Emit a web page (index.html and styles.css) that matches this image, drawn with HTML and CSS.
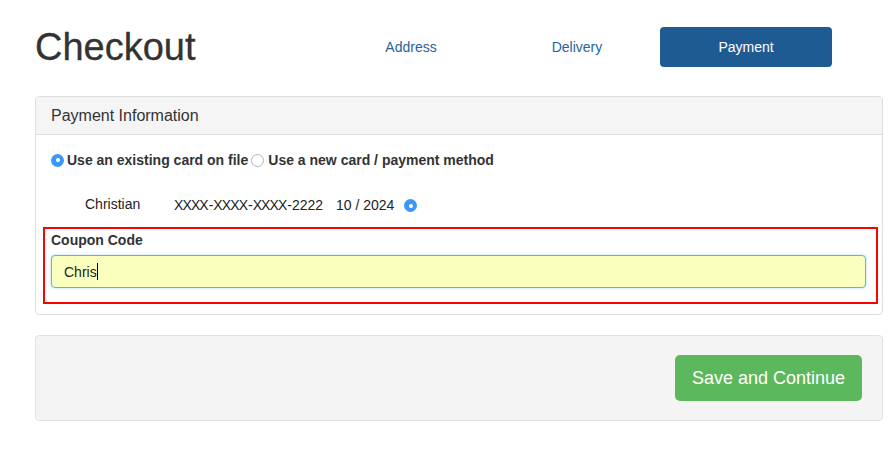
FILE: index.html
```html
<!DOCTYPE html>
<html>
<head>
<meta charset="utf-8">
<link rel="stylesheet" href="styles.css">
</head>
<body>
<div class="page">
  <header class="top">
    <h1 class="title">Checkout</h1>
    <nav class="steps">
      <a class="step step-a">Address</a>
      <a class="step step-d">Delivery</a>
      <a class="step step-active">Payment</a>
    </nav>
  </header>

  <section class="panel">
    <div class="panel-head">Payment Information</div>
    <div class="panel-body">
      <div class="choice-row">
        <label class="choice"><span class="radio radio-on"></span>Use an existing card on file</label>
        <label class="choice"><span class="radio radio-off"></span>Use a new card / payment method</label>
      </div>
      <div class="card-row">
        <span class="card-name">Christian</span>
        <span class="card-num"><span class="mask">XXXX</span>-<span class="mask">XXXX</span>-<span class="mask">XXXX</span>-2222</span>
        <span class="card-exp">10 / 2024</span>
        <span class="radio radio-on radio-small"></span>
      </div>
      <div class="coupon">
        <div class="coupon-label">Coupon Code</div>
        <div class="coupon-input"><span class="typed">Chris</span><span class="caret"></span></div>
      </div>
    </div>
  </section>

  <section class="footer-panel">
    <button class="save">Save and Continue</button>
  </section>
</div>
</body>
</html>
```

FILE: styles.css
```css
* { box-sizing: border-box; }
html, body { margin: 0; padding: 0; background: #fff; }
body {
  font-family: "Liberation Sans", Arial, Helvetica, sans-serif;
  color: #333;
  width: 890px;
}
.page {
  padding: 27px 0 0 35px;
  width: 883px;
}
.top {
  display: flex;
  align-items: center;
  height: 40px;
}
.title {
  margin: 0;
  font-size: 38px;
  font-weight: normal;
  color: #333;
  line-height: 40px;
  width: 293px;
  -webkit-text-stroke: 0.3px #333;
}
.steps {
  display: flex;
  align-items: center;
  height: 40px;
}
.step {
  display: flex;
  align-items: center;
  justify-content: center;
  height: 40px;
  font-size: 14px;
  color: #2a6496;
  text-decoration: none;
}
.step-a { width: 166px; }
.step-d { width: 166px; }
.step-active {
  width: 172px;
  background: #1f5b93;
  color: #fff;
  border-radius: 4px;
}

.panel {
  margin-top: 29px;
  border: 1px solid #ddd;
  border-radius: 4px;
  width: 848px;
  height: 219px;
}
.panel-head {
  height: 38px;
  background: #f5f5f5;
  border-bottom: 1px solid #ddd;
  border-radius: 3px 3px 0 0;
  padding-left: 15px;
  font-size: 16px;
  line-height: 37px;
  color: #333;
}
.panel-body {
  padding: 0 4px 0 7px;
}
.choice-row {
  display: flex;
  align-items: center;
  height: 18px;
  margin-top: 16px;
  padding-left: 8px;
}
.choice {
  display: flex;
  align-items: center;
  font-size: 14px;
  font-weight: bold;
  color: #333;
}
.radio {
  display: inline-block;
  width: 13px;
  height: 13px;
  border-radius: 50%;
  margin-right: 3px;
  flex: none;
}
.radio-on {
  background: #3a97f9;
  position: relative;
}
.radio-on::after {
  content: "";
  position: absolute;
  left: 4.5px;
  top: 4.5px;
  width: 4px;
  height: 4px;
  border-radius: 50%;
  background: #fff;
}
.radio-off {
  border: 1px solid #b4b4b4;
  background: #fff;
  margin-left: 3px;
  margin-right: 4px;
}
.card-row {
  display: flex;
  align-items: center;
  height: 20px;
  margin-top: 25px;
  padding-left: 42px;
}
.card-name {
  font-size: 14px;
  width: 89px;
  color: #222;
}
.card-num {
  font-size: 14px;
  color: #222;
  width: 162px;
  margin-top: 2px;
}
.mask { letter-spacing: -0.9px; margin-right: 0.9px; }
.card-exp {
  font-size: 14px;
  color: #222;
  width: 68px;
  margin-top: 2px;
}
.radio-small { margin-top: 3px; }

.coupon {
  margin-top: 13px;
  border: 2px solid #f00;
  height: 77px;
  padding: 3px 10px 0 6px;
}
.coupon-label {
  font-size: 14px;
  font-weight: bold;
  line-height: 16px;
  color: #333;
}
.coupon-input {
  margin-top: 7px;
  height: 33px;
  border: 1px solid #66afe9;
  border-radius: 4px;
  background: #faffbd;
  box-shadow: 0 0 3px rgba(102, 175, 233, 0.5);
  display: flex;
  align-items: center;
  padding-left: 12px;
  font-size: 14px;
  color: #222;
}
.caret {
  display: inline-block;
  width: 1px;
  height: 17px;
  background: #000;
}

.footer-panel {
  margin-top: 20px;
  width: 848px;
  height: 86px;
  background: #f4f4f4;
  border: 1px solid #e3e3e3;
  border-radius: 4px;
  display: flex;
  justify-content: flex-end;
  align-items: flex-start;
  padding: 19px 20px 0 0;
}
.save {
  width: 187px;
  height: 46px;
  background: #5cb85c;
  color: #fff;
  border: none;
  border-radius: 5px;
  font-family: "Liberation Sans", Arial, sans-serif;
  font-size: 18px;
  padding: 0;
}
```
